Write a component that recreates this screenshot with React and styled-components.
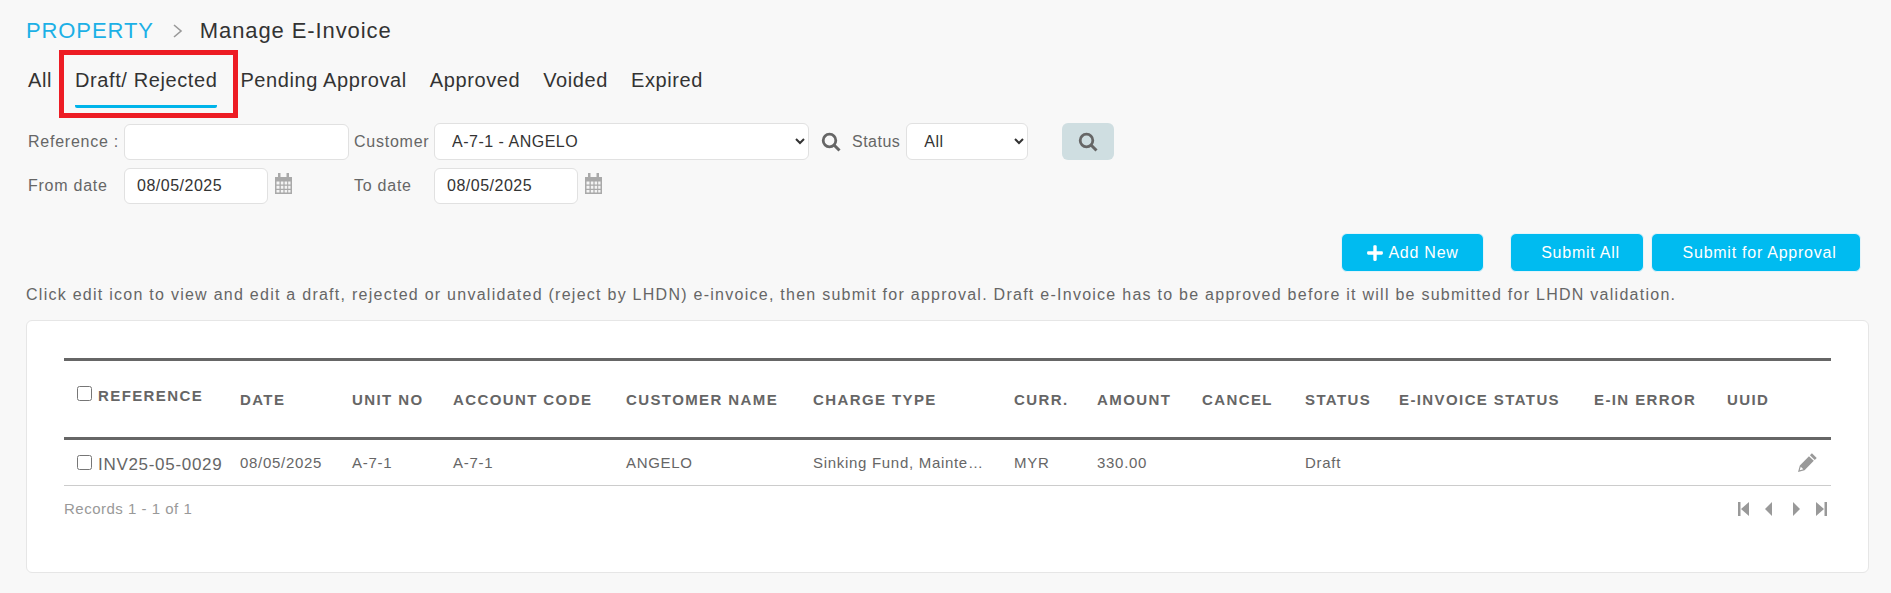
import React from "react";
import styled, { createGlobalStyle } from "styled-components";
import { FaPlus } from "react-icons/fa";

const GlobalStyle = createGlobalStyle`
  html, body {
    margin: 0;
    background: #f8f8f8;
  }
  body {
    font-family: "Liberation Sans", Arial, sans-serif;
    letter-spacing: 0.5px;
    color: #333;
  }
`;

// === layout ===
const Page = styled.div`
  width: 1891px;
  height: 593px;
  box-sizing: border-box;
  padding: 18px 22px 0 26px;
  overflow: hidden;
`;

const Breadcrumb = styled.div`
  display: flex;
  align-items: center;
  height: 26px;
  font-size: 22px;
  letter-spacing: 0.9px;
  color: #333;
`;

const Crumb = styled.span`
  color: #1cb0e6;
`;

const CrumbArrow = styled.svg`
  width: 12px;
  height: 16px;
  margin: 0 16px 0 18px;
  fill: none;
  stroke: #999;
  stroke-width: 1.6;
`;

const Tabs = styled.div`
  display: flex;
  gap: 23px;
  margin: 8px 0 0 2px;
  height: 61px;
`;

const Tab = styled.div`
  position: relative;
  height: 37px;
  padding-top: 16px;
  line-height: 24px;
  font-size: 20px;
  letter-spacing: 0.6px;
  color: #333;
  border-bottom: 3px solid ${(props) => (props.$active ? "#00b4ea" : "transparent")};
  border-radius: 2px;
  ${(props) =>
    props.$active &&
    `&::after {
      content: "";
      position: absolute;
      left: -16px;
      right: -21px;
      top: -2px;
      bottom: -13px;
      border: 5px solid #ed1c24;
      pointer-events: none;
    }`}
`;

const Filters = styled.div`
  display: grid;
  grid-template-columns: 98px 228px 82px 1fr;
  row-gap: 8px;
  align-items: center;
  margin-top: 10px;
`;

const Label = styled.label`
  font-size: 16px;
  letter-spacing: 0.75px;
  color: #666;
  padding-left: 2px;
`;

const fieldCss = `
  box-sizing: border-box;
  font-family: "Liberation Sans", Arial, sans-serif;
  font-size: 16px;
  letter-spacing: 0.5px;
  color: #333;
  background: #fff;
  border: 1px solid #e1e1e1;
  border-radius: 6px;
  outline: none;
`;

const TextInput = styled.input`
  ${fieldCss}
  width: ${(props) => props.$width}px;
  height: ${(props) => props.$height}px;
  padding: 0 12px;
`;

const Select = styled.select`
  ${fieldCss}
  width: ${(props) => props.$width}px;
  height: 37px;
  padding: 0 13px;
`;

const FieldRow = styled.div`
  display: flex;
  align-items: center;
`;

const SearchGlyph = styled.svg`
  width: 20px;
  height: 20px;
  flex: none;
  fill: none;
  stroke: #666;
`;

const InlineSearch = styled.span`
  display: flex;
  margin: 0 11px 0 12px;
`;

const StatusLabel = styled.span`
  font-size: 16px;
  color: #666;
  margin-right: 6px;
`;

const SearchButton = styled.button`
  display: flex;
  align-items: center;
  justify-content: center;
  width: 52px;
  height: 37px;
  margin-left: 34px;
  padding: 0;
  border: none;
  border-radius: 6px;
  background: #cfdee1;
`;

const CalendarGlyph = styled.svg`
  width: 19px;
  height: 23px;
  margin: 0 0 5px 6px;
  flex: none;
`;

const Actions = styled.div`
  display: flex;
  justify-content: flex-end;
  margin: 29px 8px 0 0;
`;

const ActionButton = styled.button`
  display: flex;
  align-items: center;
  justify-content: center;
  gap: 4px;
  width: ${(props) => props.$width}px;
  height: 39px;
  margin-left: ${(props) => props.$gap}px;
  padding: 0 0 0 ${(props) => props.$inset || 0}px;
  border: 1px solid #e4f4fa;
  border-radius: 6px;
  background: #00bbf0;
  color: #fff;
  font-family: inherit;
  font-size: 16px;
  letter-spacing: 0.75px;
`;

const HelpText = styled.p`
  margin: 13px 0 0;
  height: 21px;
  line-height: 20px;
  font-size: 16px;
  letter-spacing: 1.26px;
  color: #666;
  white-space: nowrap;
`;

const Card = styled.div`
  box-sizing: border-box;
  height: 253px;
  margin-top: 14px;
  padding: 37px 37px 0;
  background: #fff;
  border: 1px solid #e6e6e6;
  border-radius: 6px;
`;

// === table ===
const Table = styled.table`
  width: 1767px;
  table-layout: fixed;
  border-collapse: collapse;
  border-top: 3px solid #666;
`;

const Th = styled.th`
  height: 79px;
  padding: 0 0 0 13px;
  box-sizing: border-box;
  text-align: left;
  font-size: 15px;
  font-weight: 700;
  letter-spacing: 1.4px;
  color: #666;
  white-space: nowrap;
  border-bottom: 3px solid #666;
`;

const Td = styled.td`
  height: 47px;
  padding: 0 ${(props) => props.$right || 0}px 0 13px;
  box-sizing: border-box;
  font-size: 15px;
  letter-spacing: 0.7px;
  color: #666;
  white-space: nowrap;
  overflow: hidden;
  text-overflow: ellipsis;
  border-bottom: 1px solid #ccc;
`;

const CheckLabel = styled.span`
  display: inline-flex;
  align-items: center;
  gap: ${(props) => props.$gap}px;
  position: relative;
  top: ${(props) => props.$shift}px;
`;

const RefNumber = styled.span`
  font-size: 17px;
`;

const Check = styled.input`
  width: 15px;
  height: 15px;
  margin: 0;
  position: relative;
  top: ${(props) => props.$lift}px;
`;

const EditCell = styled.div`
  display: flex;
  justify-content: flex-end;
  padding-right: 13px;
`;

const PencilGlyph = styled.svg`
  width: 21px;
  height: 21px;
  fill: #999;
`;

const Footer = styled.div`
  display: flex;
  justify-content: space-between;
  align-items: center;
  height: 42px;
  padding-top: 2px;
  box-sizing: border-box;
  font-size: 15px;
  color: #999;
`;

const Pager = styled.div`
  display: flex;
  align-items: center;
  gap: 15px;
  padding: 2px 4px 0 0;
`;

const PagerGlyph = styled.svg`
  width: 11px;
  height: 14px;
  fill: #999;
`;

const SearchIcon = ({ width = 2.8 }) => (
  <SearchGlyph viewBox="0 0 20 20" strokeWidth={width}>
    <circle cx="8.5" cy="8.5" r="6.3" />
    <path d="M13 13l5.5 5.5" strokeWidth="3" />
  </SearchGlyph>
);

const CalendarIcon = () => (
  <CalendarGlyph viewBox="0 0 19 23">
    <path d="M1 5h17v17H1z" fill="#a9a9a9" />
    <path d="M4 1h2.5v6H4zM12.5 1H15v6h-2.5z" fill="#a9a9a9" />
    <path
      d="M2.5 9.5h3v3h-3zM6.8 9.5h2.6v3H6.8zM10.6 9.5h2.6v3h-2.6zM14.2 9.5h2.3v3h-2.3zM2.5 13.7h3v3h-3zM6.8 13.7h2.6v3H6.8zM10.6 13.7h2.6v3h-2.6zM14.2 13.7h2.3v3h-2.3zM2.5 17.9h3v2.7h-3zM6.8 17.9h2.6v2.7H6.8zM10.6 17.9h2.6v2.7h-2.6zM14.2 17.9h2.3v2.7h-2.3z"
      fill="#f4f4f4"
    />
  </CalendarGlyph>
);

const columns = [
  { label: "REFERENCE", width: 163 },
  { label: "DATE", width: 112 },
  { label: "UNIT NO", width: 101 },
  { label: "ACCOUNT CODE", width: 173 },
  { label: "CUSTOMER NAME", width: 187 },
  { label: "CHARGE TYPE", width: 201 },
  { label: "CURR.", width: 83 },
  { label: "AMOUNT", width: 105 },
  { label: "CANCEL", width: 103 },
  { label: "STATUS", width: 94 },
  { label: "E-INVOICE STATUS", width: 195 },
  { label: "E-IN ERROR", width: 133 },
  { label: "UUID", width: 117 },
];

const row = [
  { value: "08/05/2025" },
  { value: "A-7-1" },
  { value: "A-7-1" },
  { value: "ANGELO" },
  { value: "Sinking Fund, Maintenance Fund", right: 18 },
  { value: "MYR" },
  { value: "330.00" },
  { value: "" },
  { value: "Draft" },
  { value: "" },
  { value: "" },
];

const tabs = ["All", "Draft/ Rejected", "Pending Approval", "Approved", "Voided", "Expired"];

const App = () => (
  <Page>
    <GlobalStyle />
    <Breadcrumb>
      <Crumb>PROPERTY</Crumb>
      <CrumbArrow viewBox="0 0 12 16">
        <path d="M2 2l7 6-7 6" />
      </CrumbArrow>
      <span>Manage E-Invoice</span>
    </Breadcrumb>

    <Tabs>
      {tabs.map((tab) => (
        <Tab key={tab} $active={tab === "Draft/ Rejected"}>
          {tab}
        </Tab>
      ))}
    </Tabs>

    <Filters>
      <Label>Reference :</Label>
      <TextInput $width={225} $height={36} />
      <Label>Customer</Label>
      <FieldRow>
        <Select $width={375} defaultValue="angelo">
          <option value="angelo">A-7-1 - ANGELO</option>
        </Select>
        <InlineSearch>
          <SearchIcon />
        </InlineSearch>
        <StatusLabel>Status</StatusLabel>
        <Select $width={122} defaultValue="all">
          <option value="all">All</option>
        </Select>
        <SearchButton>
          <SearchIcon />
        </SearchButton>
      </FieldRow>

      <Label>From date</Label>
      <FieldRow>
        <TextInput $width={144} $height={36} defaultValue="08/05/2025" />
        <CalendarIcon />
      </FieldRow>
      <Label>To date</Label>
      <FieldRow>
        <TextInput $width={144} $height={36} defaultValue="08/05/2025" />
        <CalendarIcon />
      </FieldRow>
    </Filters>

    <Actions>
      <ActionButton $width={143} $gap={0}>
        <FaPlus size={18} />
        Add New
      </ActionButton>
      <ActionButton $width={134} $gap={26} $inset={7}>
        Submit All
      </ActionButton>
      <ActionButton $width={210} $gap={7} $inset={7}>
        Submit for Approval
      </ActionButton>
    </Actions>

    <HelpText>
      Click edit icon to view and edit a draft, rejected or unvalidated (reject by LHDN) e-invoice, then submit for
      approval. Draft e-Invoice has to be approved before it will be submitted for LHDN validation.
    </HelpText>

    <Card>
      <Table>
        <colgroup>
          {columns.map((col) => (
            <col key={col.label} width={col.width} />
          ))}
        </colgroup>
        <thead>
          <tr>
            {columns.map((col, i) => (
              <Th key={col.label}>
                {i === 0 ? (
                  <CheckLabel $shift={-3} $gap={6}>
                    <Check type="checkbox" $lift={-2} />
                    {col.label}
                  </CheckLabel>
                ) : (
                  col.label
                )}
              </Th>
            ))}
          </tr>
        </thead>
        <tbody>
          <tr>
            <Td>
              <CheckLabel $shift={3} $gap={6}>
                <Check type="checkbox" $lift={-3} />
                <RefNumber>INV25-05-0029</RefNumber>
              </CheckLabel>
            </Td>
            {row.map((cell, i) => (
              <Td key={i} $right={cell.right}>
                {cell.value}
              </Td>
            ))}
            <Td>
              <EditCell>
                <PencilGlyph viewBox="0 0 20 20">
                  <path
                    d="M14.2 1.2l4.6 4.4-1.9 2-4.6-4.4zM11.4 4l4.6 4.4-8.8 9L1 19l1.7-6.1zM3.6 14l-1 3.4 3.4-1z"
                    fillRule="evenodd"
                  />
                </PencilGlyph>
              </EditCell>
            </Td>
          </tr>
        </tbody>
      </Table>
      <Footer>
        <span>Records 1 - 1 of 1</span>
        <Pager>
          <PagerGlyph viewBox="0 0 11 14">
            <path d="M0 0h2.5v14H0zM11 0v14L3 7z" />
          </PagerGlyph>
          <PagerGlyph viewBox="0 0 11 14">
            <path d="M8 0v14L1 7z" />
          </PagerGlyph>
          <PagerGlyph viewBox="0 0 11 14">
            <path d="M3 0v14l7-7z" />
          </PagerGlyph>
          <PagerGlyph viewBox="0 0 11 14">
            <path d="M11 0H8.5v14H11zM0 0v14l8-7z" />
          </PagerGlyph>
        </Pager>
      </Footer>
    </Card>
  </Page>
);

export default App;
